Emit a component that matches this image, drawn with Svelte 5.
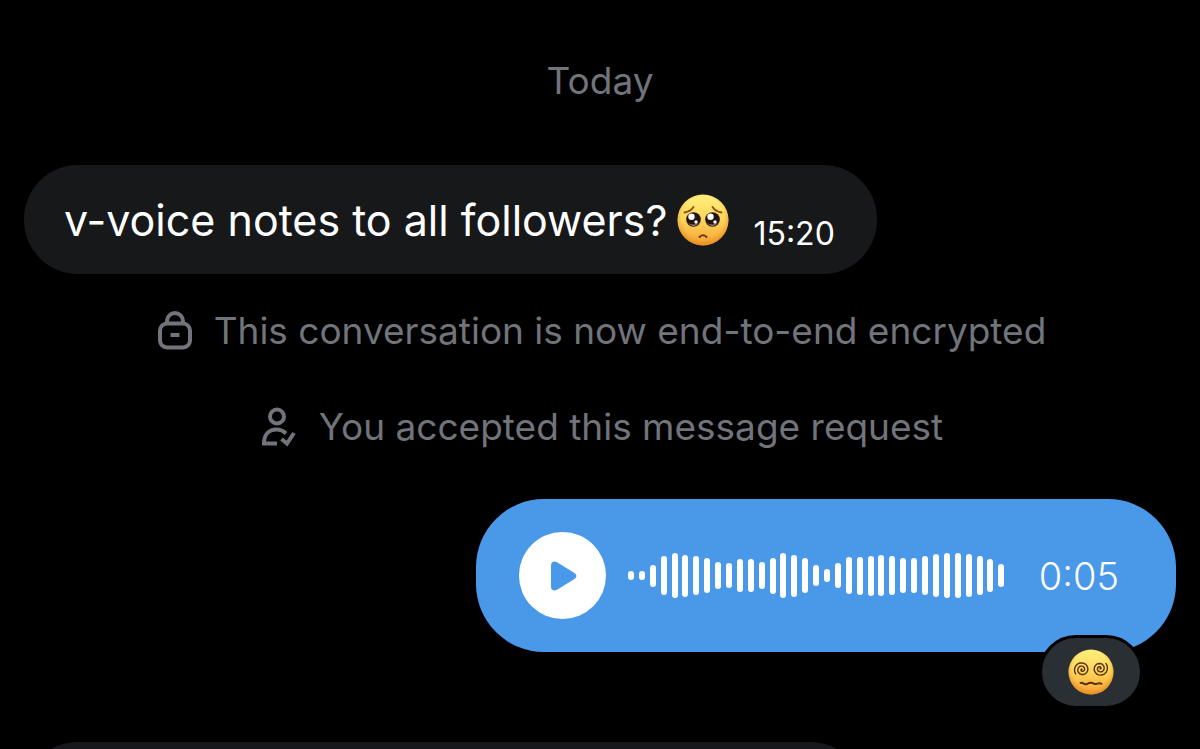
<script>
  const levels = [
    9, 9, 22, 39, 45, 42, 39, 35, 27, 25, 33, 33, 27, 36, 45, 42, 35, 21,
    13, 25, 37, 38, 40, 41, 39, 35, 35, 39, 43, 45, 45, 43, 39, 33, 23
  ];

  let playing = $state(false);

  // winds clockwise from the outer end to the centre
  function spiral(cx, cy, startAngle) {
    const steps = 48;
    const points = [];
    for (let i = 0; i <= steps; i++) {
      const t = i / steps;
      const angle = ((startAngle + t * 860) * Math.PI) / 180;
      const r = 7.8 * (1 - t);
      points.push(`${(cx + r * Math.cos(angle)).toFixed(2)},${(cy + r * Math.sin(angle)).toFixed(2)}`);
    }
    return points.join(" ");
  }
</script>

<svelte:head>
  <title>Messages</title>
</svelte:head>

<main class="chat">
  <p class="day">Today</p>

  <div class="bubble received">
    <p class="text">v-voice notes to all followers?</p>
    <svg class="emoji" viewBox="0 0 52 52" role="img" aria-label="Pleading face">
      <defs>
        <linearGradient id="face" x1="0" y1="0" x2="0" y2="1">
          <stop offset="0" stop-color="#fff07c" />
          <stop offset="0.5" stop-color="#fed45a" />
          <stop offset="1" stop-color="#f5a233" />
        </linearGradient>
        <radialGradient id="shade" cx="0.5" cy="0.45" r="0.55">
          <stop offset="0.75" stop-color="#e88c1c" stop-opacity="0" />
          <stop offset="1" stop-color="#d97c14" stop-opacity="0.6" />
        </radialGradient>
      </defs>
      <circle cx="26" cy="26" r="25.5" fill="url(#face)" />
      <circle cx="26" cy="26" r="25.5" fill="url(#shade)" />
      <path d="M7.500 18.500Q13.500 17.500 16.500 13M35.500 13Q38.500 17.500 44.500 18.500" fill="none" stroke="#8a4d0b" stroke-width="1.800" stroke-linecap="round" />
      <circle cx="16.500" cy="25.500" r="7.300" fill="#24140f" />
      <circle cx="35.500" cy="25.500" r="7.300" fill="#24140f" />
      <path d="M11 29Q16.500 35.500 22 29Q16.500 32 11 29ZM30 29Q35.500 35.500 41 29Q35.500 32 30 29Z" fill="#8d7c78" />
      <circle cx="14.500" cy="22.800" r="3.200" fill="#fff" />
      <circle cx="33.500" cy="22.800" r="3.200" fill="#fff" />
      <circle cx="19" cy="28" r="1.700" fill="#fff" />
      <circle cx="38" cy="28" r="1.700" fill="#fff" />
      <path d="M22.500 43Q26 39.500 29.500 43" fill="none" stroke="#71390b" stroke-width="2" stroke-linecap="round" />
    </svg>
    <time class="time">15:20</time>
  </div>

  <p class="notice first">
    <svg class="lock" viewBox="0 0 34 40" aria-hidden="true">
      <rect x="2" y="12.500" width="30" height="24" rx="7" />
      <path d="M9 12.500V10a8 8 0 0 1 16 0v2.500M12.500 24h9" />
    </svg>
    This conversation is now end-to-end encrypted
  </p>

  <p class="notice">
    <svg class="person" viewBox="0 0 36 40" aria-hidden="true">
      <circle cx="16" cy="9.500" r="7" />
      <path d="M16 36.500H3C3 27.500 8 22.500 15.500 22.500C19.500 22.500 22.500 24 25 26.500M20.500 32L26 36.500L33 26" />
    </svg>
    You accepted this message request
  </p>

  <div class="bubble voice">
    <button class="play" aria-label={playing ? "Pause" : "Play"} onclick={() => (playing = !playing)}>
      <svg viewBox="0 0 26 30" aria-hidden="true">
        {#if playing}
          <path d="M5 2h6v26H5zM16 2h6v26h-6z" />
        {:else}
          <path d="M0 4.500C0 1 3 -0.500 6 1.200L23.500 12C26 13.600 26 16.400 23.500 18L6 28.800C3 30.500 0 29 0 25.500Z" />
        {/if}
      </svg>
    </button>
    <div class="wave">
      {#each levels as level}
        <span class="bar" style="height: {level}px"></span>
      {/each}
    </div>
    <span class="duration">0:05</span>
    <button class="reaction" aria-label="Dizzy face reaction">
      <svg viewBox="0 0 46 46" aria-hidden="true">
        <circle cx="23" cy="23" r="22.500" fill="url(#face)" />
        <circle cx="23" cy="23" r="22.500" fill="url(#shade)" />
        <g fill="none" stroke="#56320e" stroke-width="1.400" stroke-linecap="round" stroke-linejoin="round">
          <polyline points={spiral(14, 20.5, 145)} />
          <polyline points={spiral(32, 19.5, -40)} />
          <path d="M12.500 34C14.500 32.500 16 36.500 19 35C21.500 33.500 23 32.800 25.500 34.500C28.500 36.500 30.500 32.500 33.500 34.800" stroke-width="2" />
        </g>
      </svg>
    </button>
  </div>

  <div class="bubble received next"></div>
</main>

<style>
  :global(body) {
    margin: 0;
    background: #000;
  }

  .chat {
    box-sizing: border-box;
    height: 100vh;
    overflow: hidden;
    display: flex;
    flex-direction: column;
    padding: 57px 24px 0;
    background: #000;
    color: #fff;
    font-family: Inter, "Liberation Sans", sans-serif;
  }

  p {
    margin: 0;
  }

  .day,
  .notice {
    flex: none;
    color: #71747a;
    font-size: 37px;
    line-height: 48px;
    text-align: center;
  }

  .notice {
    display: flex;
    justify-content: center;
    align-items: center;
    gap: 22px;
    margin-bottom: 48px;
    padding-left: 4px;
  }

  .first {
    margin-top: 33px;
  }

  .notice svg {
    height: 40px;
    fill: none;
    stroke: #71747a;
    stroke-width: 4;
  }

  .lock {
    width: 34px;
  }

  .person {
    width: 36px;
  }

  .bubble {
    box-sizing: border-box;
    flex: none;
    display: flex;
    align-items: center;
  }

  .received {
    align-self: flex-start;
    height: 109px;
    margin-top: 60px;
    padding: 0 42px 0 40px;
    border-radius: 54px;
    background: #16181a;
  }

  .text {
    font-size: 43px;
    line-height: 56px;
  }

  .emoji {
    width: 52px;
    height: 52px;
    margin-left: 10px;
  }

  .time {
    margin-left: 24px;
    padding-top: 28px;
    font-size: 32px;
    line-height: 28px;
  }

  .voice {
    position: relative;
    align-self: flex-end;
    height: 153px;
    width: 700px;
    max-width: 100%;
    padding: 0 57px 0 43px;
    border-radius: 68px;
    background: #4a99e9;
  }

  .play {
    flex: none;
    display: flex;
    align-items: center;
    justify-content: center;
    width: 87px;
    height: 87px;
    padding: 0 0 0 2px;
    border: 0;
    border-radius: 50%;
    background: #fff;
    cursor: pointer;
  }

  .play svg {
    width: 26px;
    height: 30px;
    fill: #4a99e9;
  }

  .wave {
    flex: 1;
    display: flex;
    align-items: center;
    justify-content: space-between;
    margin: 0 34px 0 22px;
  }

  .bar {
    width: 6px;
    border-radius: 3px;
    background: #fff;
  }

  .duration {
    font-size: 38px;
    font-weight: 300;
    line-height: 48px;
  }

  .reaction {
    position: absolute;
    right: 33px;
    bottom: -57px;
    box-sizing: border-box;
    width: 104px;
    height: 74px;
    padding: 0;
    display: flex;
    align-items: center;
    justify-content: center;
    border: 3px solid #000;
    border-radius: 37px;
    background: #2a2f33;
    cursor: pointer;
  }

  .reaction svg {
    width: 46px;
    height: 46px;
  }

  .next {
    width: 100%;
    max-width: 840px;
    margin-top: 90px;
  }
</style>
